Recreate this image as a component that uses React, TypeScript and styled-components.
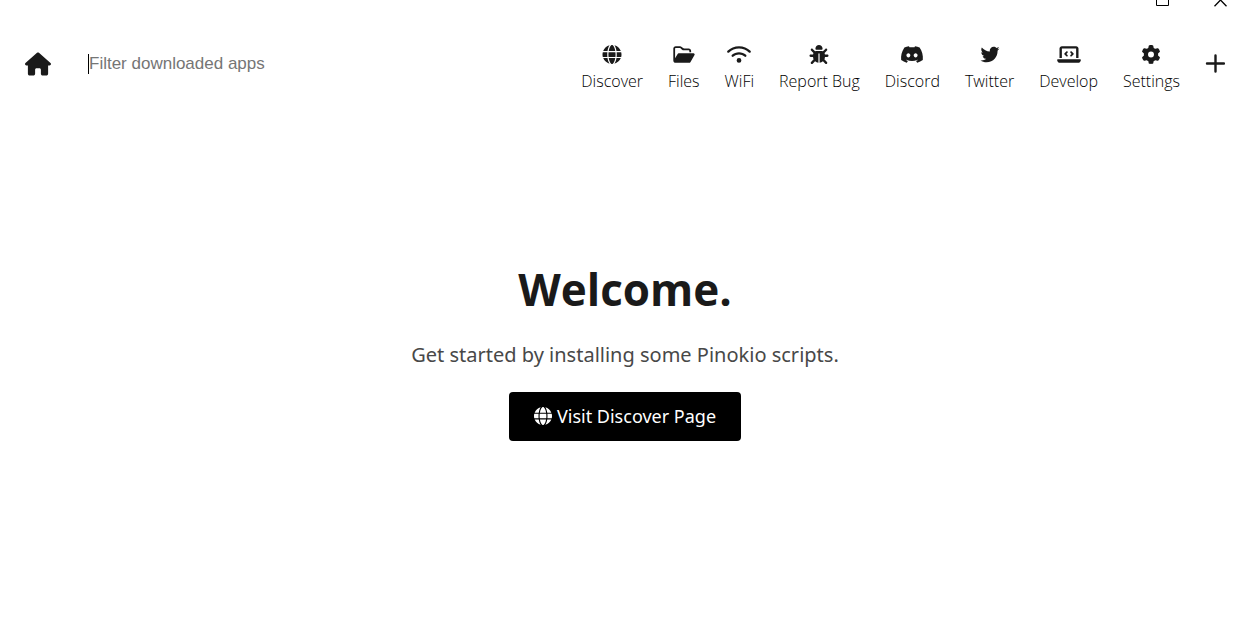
import React from "react";
import styled, { createGlobalStyle } from "styled-components";
import {
  FaDiscord,
  FaGear,
  FaGlobe,
  FaHouse,
  FaLaptopCode,
  FaTwitter,
  FaWifi,
} from "react-icons/fa6";

const GlobalStyle = createGlobalStyle`
  * { box-sizing: border-box; }
  body {
    margin: 0;
    background: #fff;
    color: #1a1a1a;
    font-family: "Open Sans", "Noto Sans", sans-serif;
  }
`;

const Page = styled.div`
  display: flex;
  flex-direction: column;
  min-height: 100vh;
`;

const TitleBar = styled.div`
  display: flex;
  justify-content: flex-end;
  gap: 44px;
  height: 8px;
  padding-right: 22px;
`;

const WindowButton = styled.button`
  display: flex;
  height: 8px;
  padding: 0;
  border: 0;
  background: none;
  color: #000;
`;

const Header = styled.header`
  display: flex;
  align-items: center;
  padding: 27px 25px 0 25px;
`;

const IconLink = styled.a<{ $size: number }>`
  display: flex;
  color: inherit;
  font-size: ${(p) => p.$size}px;
`;

const Filter = styled.input`
  flex: 1;
  min-width: 0;
  height: 20px;
  margin: 0 24px 0 37px;
  padding: 0;
  border: 0;
  border-left: 1px solid #000;
  outline: none;
  background: none;
  font: 17px "Liberation Sans", Arial, sans-serif;

  &::placeholder {
    color: #757575;
    opacity: 1;
  }
`;

const Nav = styled.nav`
  display: flex;
  align-items: center;
  gap: 25px;
`;

const NavLink = styled.a`
  display: flex;
  flex-direction: column;
  align-items: center;
  gap: 6px;
  padding-top: 10px;
  color: #000;
  font-size: 16px;
  font-weight: 300;
  line-height: 22px;
  text-decoration: none;
  white-space: nowrap;

  svg {
    height: 19px;
    width: 24px;
    color: #1a1a1a;
  }
`;

const Welcome = styled.main`
  display: flex;
  flex-direction: column;
  align-items: center;
  padding: 165px 24px 24px;
`;

const Title = styled.h1`
  margin: 0;
  font-size: 44px;
  line-height: 64px;
`;

const Lead = styled.p`
  margin: 19px 0 22px;
  color: #484848;
  font-family: "Noto Sans", "Open Sans", sans-serif;
  font-size: 20px;
  line-height: 30px;
`;

const PrimaryButton = styled.button`
  display: flex;
  align-items: center;
  gap: 5px;
  height: 49px;
  padding: 0 25px 2px;
  border: 0;
  border-radius: 4px;
  background: #000;
  color: #fff;
  font: 18px "Noto Sans", "Open Sans", sans-serif;
`;

function FolderOpen() {
  return (
    <svg viewBox="0 0 576 512" fill="currentColor" aria-hidden="true">
      <path d="M384 480h48c11.400 0 21.900-6 27.600-15.900l112-192c5.800-9.900 5.800-22.100.1-32.100S555.500 224 544 224H144c-11.400 0-21.900 6-27.600 15.900L48 357.100V96c0-8.800 7.200-16 16-16h117.500c4.200 0 8.300 1.700 11.300 4.700l26.500 26.500c21 21 49.500 32.800 79.200 32.800H416c8.800 0 16 7.200 16 16v32h48v-32c0-35.300-28.700-64-64-64H298.500c-17 0-33.300-6.700-45.300-18.700L226.700 50.700c-12-12-28.300-18.700-45.300-18.700H64C28.700 32 0 60.700 0 96v320c0 35.300 28.700 64 64 64h320z" />
    </svg>
  );
}

function Bug() {
  return (
    <svg viewBox="0 0 512 512" fill="currentColor" aria-hidden="true">
      <path d="M352 96V99.600C352 115.300 339.300 128 323.600 128H188.400C172.700 128 160 115.300 160 99.600V96C160 43 202.100 0 255.100 0C309 0 352 43 352 96zM41.400 105.400C53.900 92.900 74.100 92.900 86.600 105.400L150.600 169.400C151.300 170 151.900 170.700 152.500 171.400C166.800 164.100 182.900 160 199.100 160H312C329.100 160 345.200 164.100 359.500 171.400C360.100 170.700 360.700 170 361.400 169.400L425.400 105.400C437.900 92.900 458.100 92.900 470.600 105.400C483.100 117.900 483.100 138.100 470.600 150.600L406.600 214.600C406 215.300 405.300 215.900 404.600 216.500C410.700 228.500 414.600 241.900 415.700 256H480C497.700 256 512 270.300 512 288C512 305.700 497.700 320 480 320H416C416 344.600 410.500 367.800 400.600 388.600C402.700 389.900 404.800 391.500 406.600 393.400L470.600 457.400C483.100 469.900 483.100 490.100 470.600 502.600C458.100 515.100 437.900 515.100 425.400 502.600L362.300 439.600C337.800 461.400 306.500 475.800 272 479.200V240C272 231.200 264.800 224 256 224C247.200 224 240 231.200 240 240V479.200C205.500 475.800 174.200 461.400 149.700 439.600L86.600 502.600C74.100 515.100 53.900 515.100 41.400 502.600C28.900 490.100 28.900 469.900 41.400 457.400L105.400 393.400C107.200 391.500 109.300 389.900 111.400 388.600C101.500 367.800 96 344.600 96 320H32C14.300 320 0 305.700 0 288C0 270.300 14.300 256 32 256H96.300C97.400 241.900 101.300 228.500 107.400 216.500C106.700 215.900 106 215.300 105.400 214.600L41.400 150.600C28.900 138.100 28.900 117.900 41.400 105.400z" />
    </svg>
  );
}

function Plus() {
  return (
    <svg width="20" height="20" viewBox="0 0 20 20" stroke="currentColor" strokeWidth="2.400" strokeLinecap="round" aria-hidden="true">
      <path d="M10.500 1.500v16M2 9.500h17" />
    </svg>
  );
}

const links = [
  { label: "Discover", Icon: FaGlobe },
  { label: "Files", Icon: FolderOpen },
  { label: "WiFi", Icon: FaWifi },
  { label: "Report Bug", Icon: Bug },
  { label: "Discord", Icon: FaDiscord },
  { label: "Twitter", Icon: FaTwitter },
  { label: "Develop", Icon: FaLaptopCode },
  { label: "Settings", Icon: FaGear },
];

export default function App() {
  return (
    <Page>
      <GlobalStyle />
      <TitleBar>
        <WindowButton aria-label="Maximize">
          <svg width="14" height="8" fill="none" stroke="currentColor">
            <path d="M.5 0V5.500H12.500V0" />
          </svg>
        </WindowButton>
        <WindowButton aria-label="Close">
          <svg width="14" height="8" fill="none" stroke="currentColor" strokeWidth="1.300">
            <path d="M.5 6.200 6.500 0 12.500 6.200" />
          </svg>
        </WindowButton>
      </TitleBar>
      <Header>
        <IconLink href="#home" aria-label="Home" $size={26}>
          <FaHouse />
        </IconLink>
        <Filter type="text" aria-label="Filter downloaded apps" placeholder="Filter downloaded apps" />
        <Nav>
          {links.map(({ label, Icon }) => (
            <NavLink key={label} href="#">
              <Icon />
              {label}
            </NavLink>
          ))}
          <IconLink href="#add" aria-label="Add" $size={20}>
            <Plus />
          </IconLink>
        </Nav>
      </Header>
      <Welcome>
        <Title>Welcome.</Title>
        <Lead>Get started by installing some Pinokio scripts.</Lead>
        <PrimaryButton>
          <FaGlobe />
          Visit Discover Page
        </PrimaryButton>
      </Welcome>
    </Page>
  );
}
